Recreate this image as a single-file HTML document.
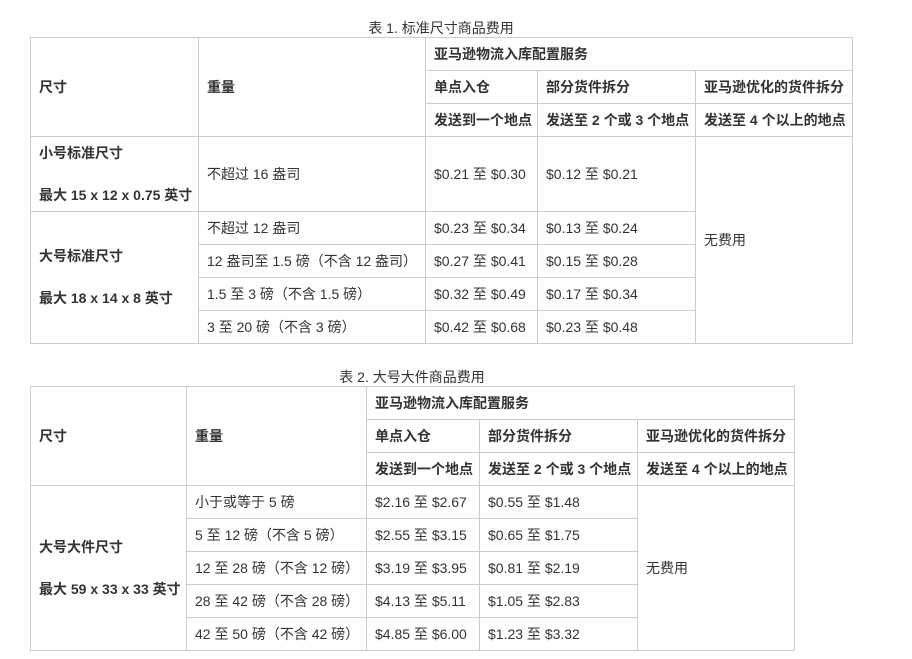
<!DOCTYPE html>
<html><head><meta charset="utf-8"><style>
html,body{margin:0;padding:0;background:#fff;width:912px;height:659px;overflow:hidden}
body{font-family:"Liberation Sans","Noto Sans CJK SC",sans-serif;font-size:14px;color:#333}
.cap{position:absolute;text-align:center;font-size:14px;color:#333;line-height:16px}
table{position:absolute;border-collapse:collapse;table-layout:fixed}
td{border:1px solid #ccc;padding:0 0 0 8px;height:32px;vertical-align:middle;white-space:nowrap;line-height:21px;box-sizing:border-box;overflow:hidden}
td.b{font-weight:bold}
</style></head><body>
<div class="cap" style="left:30px;width:822px;top:20px">表 1. 标准尺寸商品费用</div>
<table style="left:30px;top:37px;width:822px">
<colgroup><col style="width:168px"><col style="width:227px"><col style="width:112px"><col style="width:158px"><col style="width:157px"></colgroup>
<tr style="height:33px"><td class="b" rowspan="3">尺寸</td><td class="b" rowspan="3">重量</td><td class="b" colspan="3">亚马逊物流入库配置服务</td></tr>
<tr style="height:33px"><td class="b">单点入仓</td><td class="b">部分货件拆分</td><td class="b">亚马逊优化的货件拆分</td></tr>
<tr style="height:33px"><td class="b">发送到一个地点</td><td class="b">发送至 2 个或 3 个地点</td><td class="b">发送至 4 个以上的地点</td></tr>
<tr style="height:75px"><td class="b">小号标准尺寸<br><br>最大 15 x 12 x 0.75 英寸</td><td>不超过 16 盎司</td><td>$0.21 至 $0.30</td><td>$0.12 至 $0.21</td><td rowspan="5">无费用</td></tr>
<tr style="height:33px"><td class="b" rowspan="4">大号标准尺寸<br><br>最大 18 x 14 x 8 英寸</td><td>不超过 12 盎司</td><td>$0.23 至 $0.34</td><td>$0.13 至 $0.24</td></tr>
<tr style="height:33px"><td>12 盎司至 1.5 磅（不含 12 盎司）</td><td>$0.27 至 $0.41</td><td>$0.15 至 $0.28</td></tr>
<tr style="height:33px"><td>1.5 至 3 磅（不含 1.5 磅）</td><td>$0.32 至 $0.49</td><td>$0.17 至 $0.34</td></tr>
<tr style="height:33px"><td>3 至 20 磅（不含 3 磅）</td><td>$0.42 至 $0.68</td><td>$0.23 至 $0.48</td></tr>
</table>

<div class="cap" style="left:30px;width:764px;top:369px">表 2. 大号大件商品费用</div>
<table style="left:30px;top:386px;width:764px">
<colgroup><col style="width:156px"><col style="width:180px"><col style="width:113px"><col style="width:158px"><col style="width:157px"></colgroup>
<tr style="height:33px"><td class="b" rowspan="3">尺寸</td><td class="b" rowspan="3">重量</td><td class="b" colspan="3">亚马逊物流入库配置服务</td></tr>
<tr style="height:33px"><td class="b">单点入仓</td><td class="b">部分货件拆分</td><td class="b">亚马逊优化的货件拆分</td></tr>
<tr style="height:33px"><td class="b">发送到一个地点</td><td class="b">发送至 2 个或 3 个地点</td><td class="b">发送至 4 个以上的地点</td></tr>
<tr style="height:33px"><td class="b" rowspan="5">大号大件尺寸<br><br>最大 59 x 33 x 33 英寸</td><td>小于或等于 5 磅</td><td>$2.16 至 $2.67</td><td>$0.55 至 $1.48</td><td rowspan="5">无费用</td></tr>
<tr style="height:33px"><td>5 至 12 磅（不含 5 磅）</td><td>$2.55 至 $3.15</td><td>$0.65 至 $1.75</td></tr>
<tr style="height:33px"><td>12 至 28 磅（不含 12 磅）</td><td>$3.19 至 $3.95</td><td>$0.81 至 $2.19</td></tr>
<tr style="height:33px"><td>28 至 42 磅（不含 28 磅）</td><td>$4.13 至 $5.11</td><td>$1.05 至 $2.83</td></tr>
<tr style="height:33px"><td>42 至 50 磅（不含 42 磅）</td><td>$4.85 至 $6.00</td><td>$1.23 至 $3.32</td></tr>
</table>
</body></html>
